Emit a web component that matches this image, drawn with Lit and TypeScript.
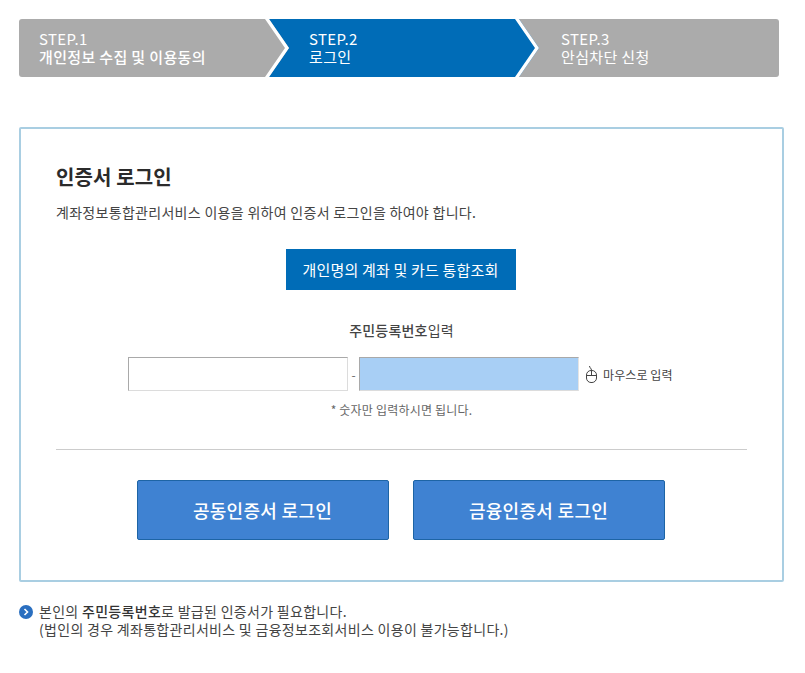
import { LitElement, html, css } from "lit";
import { customElement } from "lit/decorators.js";

const chevron = (fill: string, cls: string) => html`<svg class="chev ${cls}" width="26" height="58" viewBox="0 0 26 58">
  <polygon points="0,0 4,0 24,29 4,58 0,58" fill="${fill}"></polygon>
  <polygon points="0,0 4,0 24,29 4,58 0,58 20,29" fill="#fff"></polygon>
</svg>`;

@customElement("app-root")
export class AppRoot extends LitElement {
  static styles = css`
    :host {
      display: block;
      width: 805px;
      height: 673px;
      box-sizing: border-box;
      padding: 19px 21px 0 19px;
      background: #fff;
      font-family: "Noto Sans CJK KR", "Noto Sans", sans-serif;
      color: #333;
    }
    .steps { display: flex; width: 760px; height: 58px; color: #fff; font-size: 15px; line-height: 18px; letter-spacing: 0.35px; }
    .step { position: relative; box-sizing: border-box; height: 58px; padding: 11px 0 0 20px; background: #ababab; }
    .s1 { width: 249px; border-radius: 3px 0 0 3px; }
    .s2 { width: 251px; padding-left: 41px; background: #006cb7; }
    .s3 { flex: 1; padding-left: 42px; border-radius: 0 3px 3px 0; }
    .step b { font-weight: 500; }
    .step div { white-space: nowrap; }
    .chev { position: absolute; top: 0; z-index: 1; }
    .c1 { right: -23px; }
    .c2 { right: -22px; }
    .card {
      box-sizing: border-box;
      width: 765px;
      height: 455px;
      margin-top: 50px;
      border: 2px solid #a9cee2;
      border-radius: 2px;
      padding: 33px 35px 0;
    }
    h1 { margin: 0; font-size: 20px; line-height: 30px; font-weight: 700; color: #2b2b2b; letter-spacing: 0.1px; }
    .desc { margin: 11px 0 0; font-size: 14px; line-height: 18px; letter-spacing: 0.3px; color: #444; }
    .center { display: flex; justify-content: center; padding-right: 2px; }
    .query {
      margin-top: 28px;
      width: 230px; height: 41px; box-sizing: border-box;
      border: 0; background: #006cb7; color: #fff;
      font: 400 15px "Noto Sans CJK KR", sans-serif;
      letter-spacing: 0.2px;
    }
    .label { margin-top: 30px; text-align: center; font-size: 14px; line-height: 20px; letter-spacing: 0.2px; color: #444; }
    .label b { font-weight: 500; }
    .inputs { display: flex; align-items: center; margin: 17px 0 0 72px; }
    .field {
      box-sizing: border-box; width: 220px; height: 34px;
      border: 1px solid #dcdcdc; border-top: 1px solid #a9a9a9; border-left: 1px solid #a9a9a9;
      background: #fff;
    }
    .field.on { background: #a8cff5; border-right-color: #e4e4e4; }
    .dash { width: 11px; text-align: center; font-size: 12px; color: #666; }
    .mouse { display: flex; align-items: center; margin-left: 6px; font-size: 12px; letter-spacing: 0.1px; color: #444; gap: 5px; }
    .hint { margin-top: 10px; text-align: center; font-size: 12px; line-height: 18px; letter-spacing: 0.2px; color: #666; }
    hr { margin: 30px 0 0; border: 0; border-top: 1px solid #ccc; }
    .btns { display: flex; justify-content: center; gap: 24px; margin-top: 30px; padding-right: 2px; }
    .btn {
      box-sizing: border-box; width: 252px; height: 60px;
      border: 1px solid #1d64a5; border-radius: 2px;
      background: #3f82d2; color: #fff;
      font: 500 18px "Noto Sans CJK KR", sans-serif;
      letter-spacing: 0.3px;
    }
    .note { display: flex; gap: 6px; margin-top: 20px; font-size: 14px; line-height: 18px; letter-spacing: 0.3px; color: #444; }
    .note b { font-weight: 500; color: #333; }
    .note svg { flex: none; margin-top: 3px; }
  `;

  render() {
    return html`
      <div class="steps">
        <div class="step s1">
          <div>STEP.1</div><div><b>개인정보 수집 및 이용동의</b></div>
          ${chevron("#ababab", "c1")}
        </div>
        <div class="step s2">
          <div>STEP.2</div><div>로그인</div>
          ${chevron("#006cb7", "c2")}
        </div>
        <div class="step s3">
          <div>STEP.3</div><div>안심차단 신청</div>
        </div>
      </div>
      <section class="card">
        <h1>인증서 로그인</h1>
        <p class="desc">계좌정보통합관리서비스 이용을 위하여 인증서 로그인을 하여야 합니다.</p>
        <div class="center"><button class="query">개인명의 계좌 및 카드 통합조회</button></div>
        <div class="label"><b>주민등록번호</b>입력</div>
        <div class="inputs">
          <div class="field"></div>
          <div class="dash">-</div>
          <div class="field on"></div>
          <div class="mouse">
            <svg width="13" height="19" viewBox="0 0 13 19" fill="none" stroke="#444" stroke-width="1">
              <rect x="1.5" y="5.5" width="10" height="12" rx="4.5"></rect>
              <path d="M1.5 10.5H11.5M6.5 5.5V10.5M6.5 5.5C6.5 3 4.5 3 4.5 1"></path>
            </svg>
            <span>마우스로 입력</span>
          </div>
        </div>
        <div class="hint">* 숫자만 입력하시면 됩니다.</div>
        <hr />
        <div class="btns">
          <button class="btn">공동인증서 로그인</button>
          <button class="btn">금융인증서 로그인</button>
        </div>
      </section>
      <div class="note">
        <svg width="14" height="14" viewBox="0 0 14 14">
          <circle cx="7" cy="7" r="7" fill="#2a6fc0"></circle>
          <path d="M5.5 4L8.5 7L5.5 10" fill="none" stroke="#fff" stroke-width="1.6"></path>
        </svg>
        <div>본인의 <b>주민등록번호</b>로 발급된 인증서가 필요합니다.<br />(법인의 경우 계좌통합관리서비스 및 금융정보조회서비스 이용이 불가능합니다.)</div>
      </div>
    `;
  }
}
